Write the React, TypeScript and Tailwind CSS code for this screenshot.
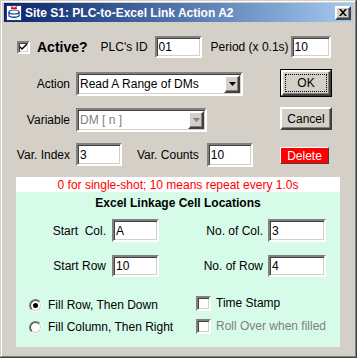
import React from 'react';

const sunken =
  'bg-white border-2 border-t-[#808080] border-l-[#808080] border-b-white border-r-white shadow-[inset_1px_1px_0_#404040,inset_-1px_-1px_0_#d4d0c8]';
const raised =
  'bg-[#d4d0c8] border-2 border-t-white border-l-white border-b-[#404040] border-r-[#404040] shadow-[inset_-1px_-1px_0_#808080,inset_1px_1px_0_#d4d0c8]';

function TextBox({ value, className }: { value: string; className: string }) {
  return (
    <div className={`${sunken} ${className} flex items-center pl-[2px] text-[12px] text-black`}>
      {value}
    </div>
  );
}

function ArrowButton({ disabled }: { disabled?: boolean }) {
  return (
    <div className={`${raised} w-[16px] h-full flex items-center justify-center`}>
      <svg width="7" height="4" viewBox="0 0 7 4">
        <polygon points="0,0 7,0 3.5,4" fill={disabled ? '#808080' : '#000'} />
      </svg>
    </div>
  );
}

function CheckBox({ checked, size }: { checked?: boolean; size: number }) {
  return (
    <div
      className={`${sunken} flex items-center justify-center shrink-0`}
      style={{ width: size, height: size }}
    >
      {checked && (
        <svg width="7" height="7" viewBox="0 0 7 7">
          <path d="M0 2 L0 4 L2 6 L7 1 L7 -1 L2 4 Z" fill="#000" />
        </svg>
      )}
    </div>
  );
}

function Radio({ checked }: { checked?: boolean }) {
  return (
    <div className="w-[13px] h-[13px] shrink-0 rounded-full border border-t-[#808080] border-l-[#808080] border-b-white border-r-white">
      <div className="w-full h-full rounded-full bg-white border border-t-[#404040] border-l-[#404040] border-b-[#d4d0c8] border-r-[#d4d0c8] flex items-center justify-center">
        {checked && <div className="w-[5px] h-[5px] rounded-full bg-black" />}
      </div>
    </div>
  );
}

function TitleIcon() {
  return (
    <svg width="16" height="16" viewBox="0 0 16 16">
      <rect x="0.5" y="0.5" width="15" height="15" fill="#fff" stroke="#1c3f94" />
      <path d="M5 1.5 L8 3.5 L11 1.5 M5 3.5 L11 3.5" stroke="#e01010" strokeWidth="1.2" fill="none" />
      <ellipse cx="8" cy="7" rx="5" ry="2" fill="none" stroke="#1c3f94" strokeWidth="1.2" />
      <path d="M3 7 L3 11 Q8 14 13 11 L13 7" fill="none" stroke="#1c3f94" strokeWidth="1.2" />
      <path d="M5 9.5 L11 9.5 M5 11.5 L11 11.5" stroke="#7f9fdc" strokeWidth="1" />
    </svg>
  );
}

export default function App() {
  return (
    <div
      className="w-[357px] h-[358px] bg-[#d4d0c8] pt-[3px] px-[4px] shadow-[inset_-1px_-1px_0_#404040,inset_1px_1px_0_#d4d0c8,inset_-2px_-2px_0_#808080,inset_2px_2px_0_#fff] text-black text-[12px] font-['Liberation_Sans',Arial,sans-serif] overflow-hidden"
    >
      {/* title bar */}
      <div className="h-[19px] flex items-center bg-gradient-to-r from-[#0a246a] to-[#a6caf0] pl-[2px] pr-[2px]">
        <TitleIcon />
        <span className="ml-[3px] text-white font-bold text-[12px] leading-[14px] whitespace-nowrap">
          Site S1: PLC-to-Excel Link Action A2
        </span>
        <div className={`${raised} ml-auto w-[16px] h-[14px] flex items-center justify-center`}>
          <svg width="8" height="7" viewBox="0 0 8 7">
            <path d="M0 0 L2 0 L4 2.2 L6 0 L8 0 L5 3.5 L8 7 L6 7 L4 4.8 L2 7 L0 7 L3 3.5 Z" fill="#000" />
          </svg>
        </div>
      </div>

      {/* active row */}
      <div className="mt-[14px] h-[22px] flex items-center pl-[13px]">
        <CheckBox checked size={13} />
        <span className="ml-[7px] font-bold text-[14px]">Active?</span>
        <span className="ml-[13px]">PLC's ID</span>
        <TextBox value="01" className="ml-[7px] w-[47px] h-[22px]" />
        <span className="ml-[9px] whitespace-nowrap">Period (x 0.1s)</span>
        <TextBox value="10" className="ml-[2px] w-[40px] h-[22px]" />
      </div>

      {/* action / variable / index */}
      <div className="mt-[11px] flex items-start">
        <div className="w-[276px] pt-[3px] flex flex-col">
          <div className="h-[24px] flex items-center">
            <span className="w-[66px] text-right">Action</span>
            <div className={`${sunken} ml-[6px] w-[167px] h-[24px] flex items-center pl-[1px] pr-[1px] py-[1px]`}>
              <span className="flex-1 pl-[1px] whitespace-nowrap">Read A Range of DMs</span>
              <ArrowButton />
            </div>
          </div>
          <div className="mt-[12px] h-[24px] flex items-center">
            <span className="w-[66px] text-right">Variable</span>
            <div className={`${sunken} ml-[6px] w-[131px] h-[24px] flex items-center pl-[1px] pr-[1px] py-[1px]`}>
              <span className="flex-1 pl-[1px] text-[#808080]">DM [ n ]</span>
              <ArrowButton disabled />
            </div>
          </div>
          <div className="mt-[11px] h-[23px] flex items-center">
            <span className="w-[66px] text-right">Var. Index</span>
            <TextBox value="3" className="ml-[6px] w-[46px] h-[23px]" />
            <span className="ml-[15px] whitespace-nowrap">Var. Counts</span>
            <TextBox value="10" className="ml-[8px] w-[46px] h-[24px]" />
          </div>
        </div>
        <div className="flex flex-col">
          <div className="w-[52px] h-[28px] bg-black p-[1px]">
            <div className={`${raised} w-full h-full p-[2px]`}>
              <div className="w-full h-full border border-dotted border-black flex items-center justify-center text-[12px]">
                OK
              </div>
            </div>
          </div>
          <div className={`${raised} mt-[10px] w-[52px] h-[23px] flex items-center justify-center text-[12px]`}>
            Cancel
          </div>
          <div className="mt-[17px] w-[49px] h-[17px] bg-[#ff0000] border border-t-white border-l-white border-b-[#404040] border-r-[#404040] flex items-center justify-center text-white text-[12px]">
            Delete
          </div>
        </div>
      </div>

      {/* excel linkage panel */}
      <div className="mt-[11px] ml-[12px] w-[324px]">
        <div className="h-[15px] bg-white flex items-center justify-center text-[#ff0000] leading-[14px]">
          0 for single-shot; 10 means repeat every 1.0s
        </div>
        <div className="h-[155px] bg-[#d7fbe9] flex flex-col">
          <div className="mt-[4px] h-[14px] text-center font-bold leading-[14px]">
            Excel Linkage Cell Locations
          </div>
          <div className="mt-[9px] h-[23px] flex items-center">
            <span className="w-[90px] text-right whitespace-pre">Start  Col.</span>
            <TextBox value="A" className="ml-[6px] w-[47px] h-[23px]" />
            <span className="w-[104px] text-right">No. of Col.</span>
            <TextBox value="3" className="ml-[5px] w-[58px] h-[23px]" />
          </div>
          <div className="mt-[13px] h-[22px] flex items-center">
            <span className="w-[90px] text-right">Start Row</span>
            <TextBox value="10" className="ml-[6px] w-[47px] h-[22px]" />
            <span className="w-[104px] text-right">No. of Row</span>
            <TextBox value="4" className="ml-[5px] w-[58px] h-[22px]" />
          </div>
          <div className="mt-[15px] flex">
            <div className="w-[180px] pl-[13px] flex flex-col">
              <div className="h-[22px] flex items-center pt-[4px]">
                <Radio checked />
                <span className="ml-[6px] whitespace-nowrap">Fill Row, Then Down</span>
              </div>
              <div className="mt-[1px] h-[22px] flex items-center pt-[2px]">
                <Radio />
                <span className="ml-[6px] whitespace-nowrap">Fill Column, Then Right</span>
              </div>
            </div>
            <div className="flex flex-col">
              <div className="h-[22px] flex items-center">
                <CheckBox size={15} />
                <span className="ml-[5px] whitespace-nowrap">Time Stamp</span>
              </div>
              <div className="mt-[1px] h-[22px] flex items-center">
                <CheckBox size={15} />
                <span className="ml-[5px] whitespace-nowrap text-[#808080]">Roll Over when filled</span>
              </div>
            </div>
          </div>
        </div>
      </div>
    </div>
  );
}
